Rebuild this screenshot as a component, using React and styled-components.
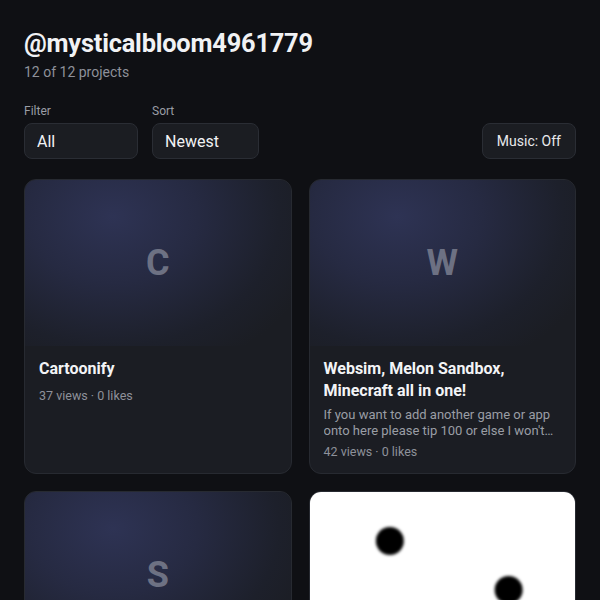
import React from 'react';
import styled, { createGlobalStyle } from 'styled-components';

const GlobalStyle = createGlobalStyle`
  body {
    margin: 0;
    background: #0f1014;
    font-family: Roboto, "Noto Sans", "Liberation Sans", sans-serif;
    color: #f1f2f4;
  }
`;

const Page = styled.div`
  padding: 28px 24px 24px;
`;

const Title = styled.h1`
  font-size: 25.4px;
  font-weight: 700;
  line-height: 30px;
  margin: 0;
  letter-spacing: -0.2px;
`;

const Count = styled.div`
  font-size: 14px;
  color: #8e919a;
  margin-top: 6px;
`;

const Controls = styled.div`
  display: flex;
  align-items: flex-end;
  justify-content: space-between;
  margin-top: 24px;
`;

const Group = styled.div`
  display: flex;
  gap: 14px;
`;

const Field = styled.label`
  display: flex;
  flex-direction: column;
  gap: 5px;
`;

const Label = styled.span`
  font-size: 12px;
  color: #9a9da5;
`;

const Select = styled.select`
  appearance: none;
  width: ${p => p.$w}px;
  height: 36px;
  padding: 0 12px;
  background: #1b1d22;
  border: 1px solid #2a2d34;
  border-radius: 8px;
  color: #f1f2f4;
  font-family: inherit;
  font-size: 16px;
  outline: none;
`;

const Button = styled.button`
  height: 36px;
  padding: 0 14px;
  background: #1b1d22;
  border: 1px solid #2a2d34;
  border-radius: 8px;
  color: #e8e9ec;
  font-family: inherit;
  font-size: 14px;
`;

const Grid = styled.div`
  display: grid;
  grid-template-columns: 1fr 1fr;
  gap: 17px;
  margin-top: 20px;
`;

const Card = styled.div`
  display: flex;
  flex-direction: column;
  background: #1b1d23;
  border: 1px solid #272a31;
  border-radius: 12px;
  overflow: hidden;
`;

const Thumb = styled.div`
  aspect-ratio: 16 / 10;
  display: flex;
  align-items: center;
  justify-content: center;
  background: ${p => p.$white
    ? '#ffffff'
    : 'radial-gradient(ellipse 80% 100% at 33% 22%, #2e3354 0%, #262a42 40%, #1d202b 78%, #1b1d23 100%)'};
`;

const Letter = styled.span`
  font-size: 36px;
  font-weight: 700;
  color: #6d7183;
`;

const Body = styled.div`
  padding: 12px 14px 14px;
`;

const CardTitle = styled.div`
  font-size: 16px;
  font-weight: 700;
  line-height: 22px;
  color: #f3f4f6;
`;

const Desc = styled.div`
  font-size: 13px;
  line-height: 16px;
  color: #9a9da5;
  margin-top: 5px;
  display: -webkit-box;
  -webkit-line-clamp: 2;
  -webkit-box-orient: vertical;
  overflow: hidden;
`;

const Meta = styled.div`
  font-size: 12.5px;
  line-height: 15px;
  color: #8e919a;
  margin-top: ${p => (p.$afterDesc ? '5px' : '8px')};
`;

const Dots = () => (
  <svg width="100%" height="100%" viewBox="0 0 266 166" preserveAspectRatio="none">
    <defs>
      <filter id="soft">
        <feGaussianBlur stdDeviation="1.4" />
      </filter>
    </defs>
    <g filter="url(#soft)" fill="#000">
      <circle cx="80" cy="49" r="14" />
      <circle cx="199" cy="98" r="14" />
    </g>
  </svg>
);

const projects = [
  { letter: 'C', title: 'Cartoonify', views: 37, likes: 0 },
  {
    letter: 'W',
    title: 'Websim, Melon Sandbox, Minecraft all in one!',
    desc: "If you want to add another game or app onto here please tip 100 or else I won't add it",
    views: 42,
    likes: 0,
  },
  { letter: 'S', title: 'Sandbox', views: 18, likes: 0 },
  { image: true, title: 'Dots', views: 12, likes: 0 },
];

export default function App() {
  return (
    <>
      <GlobalStyle />
      <Page>
        <Title>@mysticalbloom4961779</Title>
        <Count>12 of 12 projects</Count>
        <Controls>
          <Group>
            <Field>
              <Label>Filter</Label>
              <Select $w={114} defaultValue="all">
                <option value="all">All</option>
              </Select>
            </Field>
            <Field>
              <Label>Sort</Label>
              <Select $w={107} defaultValue="newest">
                <option value="newest">Newest</option>
              </Select>
            </Field>
          </Group>
          <Button>Music: Off</Button>
        </Controls>
        <Grid>
          {projects.map(p => (
            <Card key={p.title}>
              <Thumb $white={p.image}>
                {p.image ? <Dots /> : <Letter>{p.letter}</Letter>}
              </Thumb>
              <Body>
                <CardTitle>{p.title}</CardTitle>
                {p.desc && <Desc>{p.desc}</Desc>}
                <Meta $afterDesc={!!p.desc}>
                  {p.views} views · {p.likes} likes
                </Meta>
              </Body>
            </Card>
          ))}
        </Grid>
      </Page>
    </>
  );
}
